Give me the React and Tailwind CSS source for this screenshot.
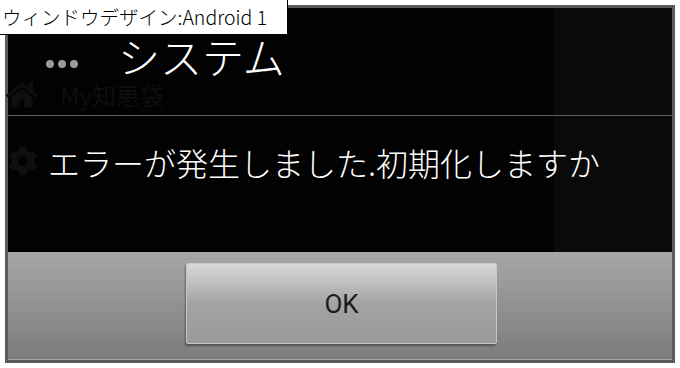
import { FaHome, FaCog } from 'react-icons/fa';

const jp = "font-['Noto_Sans_CJK_JP','Noto_Sans',sans-serif]";

const Dots = () => (
    <div className="flex gap-[4px]">
        <span className="w-[8px] h-[8px] rounded-full bg-[#9a9a9a]" />
        <span className="w-[8px] h-[8px] rounded-full bg-[#9a9a9a]" />
        <span className="w-[8px] h-[8px] rounded-full bg-[#9a9a9a]" />
    </div>
);

const App = () => {
    return (
        <div className={`relative w-[680px] h-[368px] bg-white overflow-hidden ${jp}`}>

            {/* caption */}
            <div className="absolute top-0 left-0 z-10 h-[35px] w-[288px] bg-white border-r border-b border-black flex items-center pl-[2px]">
                <span className="text-[19.5px] leading-none text-black whitespace-nowrap font-light">ウィンドウデザイン:Android 1</span>
            </div>

            {/* dialog frame */}
            <div className="ml-[5px] mt-[5px] w-[670px] h-[358px] border-[3px] border-[#5b5b5b] flex flex-col">

                <div className="flex-1 flex flex-col bg-[linear-gradient(to_right,#020202_546px,#0a0a0a_546px)]">

                    {/* title */}
                    <div className="h-[108px] flex flex-col pt-[27px] border-b border-[#5e5e5e]">
                        <div className="flex items-center">
                            <div className="w-[110px] pl-[38px] pt-[16px]">
                                <Dots />
                            </div>
                            <span className="text-white text-[42px] leading-none font-light">システム</span>
                        </div>
                        <div className="flex items-center mt-[2px]">
                            <FaHome className="text-[#0f0f0f] text-[32px] -ml-[2px]" />
                            <span className="text-[#0e0e0e] text-[24px] leading-none ml-[22px]">My知恵袋</span>
                        </div>
                    </div>

                    {/* message */}
                    <div className="flex-1 flex items-start pt-[30px]">
                        <FaCog className="text-[#0f0f0f] text-[30px]" />
                        <span className="text-white text-[32px] leading-none ml-[10px] whitespace-nowrap font-light">エラーが発生しました.初期化しますか</span>
                    </div>
                </div>

                {/* button bar */}
                <div className="h-[108px] bg-[linear-gradient(to_bottom,#a7a7a7,#7c7c7c)] border-b border-[#a4a4a4] pt-[11px] pl-[178px]">
                    <button className="w-[311px] h-[81px] rounded-[2px] border border-[#c8c8c8] bg-[linear-gradient(to_bottom,#d9d9d9,#a3a3a3_50%,#999999)] shadow-[-1px_2px_2px_rgba(0,0,0,0.35)] flex items-center justify-center">
                        <span className="font-['Roboto','Noto_Sans',sans-serif] text-[26px] text-[#1b1b1b] leading-none">OK</span>
                    </button>
                </div>
            </div>
        </div>
    );
};

export default App;
